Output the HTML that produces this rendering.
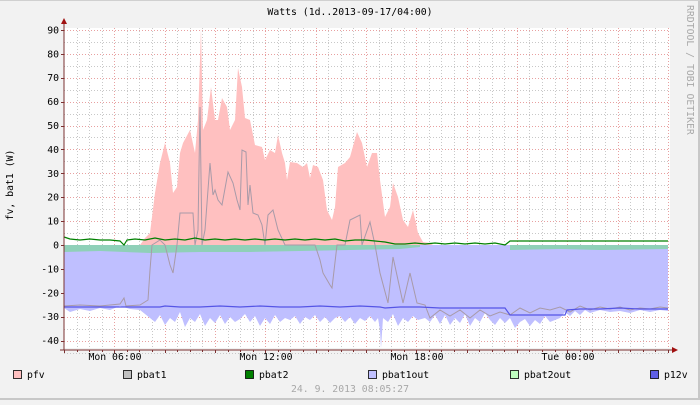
<!DOCTYPE html>
<html><head><meta charset="utf-8"><style>
html,body{margin:0;padding:0;background:#f2f2f2;}
svg text{font-family:"DejaVu Sans Mono","Liberation Mono",monospace;font-size:9.8px;}
</style></head><body>
<svg width="700" height="400" xmlns="http://www.w3.org/2000/svg">
<rect x="0" y="0" width="700" height="400" fill="#f2f2f2"/>
<rect x="698" y="0" width="2" height="400" fill="#c8c8c8"/>
<rect x="0" y="398" width="700" height="2" fill="#c8c8c8"/>
<rect x="0" y="0" width="700" height="1" fill="#d0d0d0"/>
<rect x="64" y="28" width="606" height="320" fill="#ffffff"/>
<g id="grid" stroke-width="1" stroke-dasharray="1,2"></g>
<!-- pfv -->
<polygon fill="#ffc0c0" points="140,245 145,238 150,233 155,193 160,163 165,143 170,163 173,193 177,187 180,153 183,143 190,130 195,153 198,120 201,28 203,130 207,120 211,87 215,120 218,120 222,98 227,107 230,130 235,120 238,68 242,87 245,118 250,120 255,145 262,147 265,160 270,150 275,153 278,135 282,153 285,163 287,180 290,162 297,163 303,167 307,163 310,178 313,165 318,167 323,180 327,210 332,220 335,207 338,167 345,163 350,157 357,132 362,143 367,167 372,153 377,153 380,180 385,217 390,207 393,183 398,197 403,220 408,227 413,210 418,233 423,242 430,243 433,245"/>
<!-- pbat1out -->
<polygon fill="#bfbfff" points="64,245 64,308 70,312 80,309 90,311 100,308 110,310 120,306 130,309 140,310 150,318 155,322 160,315 165,325 170,318 175,322 180,312 185,327 190,318 195,322 200,314 205,326 210,318 215,323 220,315 225,324 230,317 235,322 240,319 245,314 250,322 255,316 260,326 265,318 270,324 275,315 280,322 285,318 290,320 295,316 300,324 305,317 310,320 315,315 320,322 325,317 330,323 335,318 340,316 345,322 350,317 355,324 360,318 365,321 370,316 375,322 378,318 380,330 381,348 383,318 388,322 393,314 398,326 403,318 408,322 413,316 418,320 425,318 430,322 435,315 440,324 445,315 450,325 455,318 460,323 465,314 470,326 475,318 480,322 485,313 490,320 495,325 500,318 505,323 510,318 515,328 520,322 525,319 530,326 535,320 540,324 545,316 550,322 555,320 560,318 565,312 570,316 575,311 580,315 585,310 590,313 600,310 610,312 620,311 630,313 640,310 650,312 660,310 668,311 668,245"/>
<!-- pbat2out band -->
<polygon fill="#8fd0b8" points="64,245 64,252 100,251 150,253 200,252 250,252 300,251 350,250 400,249 420,247 420,245"/>
<polygon fill="#8fd0b8" points="510,245 510,250 560,249 600,250 668,249 668,245"/>
<!-- pbat1 line -->
<polyline fill="none" stroke="#a89aa8" stroke-width="1" points="64,306 80,305 100,306 120,304 124,298 126,306 140,305 148,300 150,270 152,245 160,240 165,245 170,265 173,273 177,245 180,213 193,213 195,245 198,230 200,107 202,245 205,230 210,163 213,195 215,190 218,200 222,205 228,172 233,183 237,200 240,210 242,150 246,152 248,205 250,185 253,213 258,215 262,225 265,245 268,215 273,210 278,230 285,245 300,245 315,245 320,260 323,273 330,285 332,288 337,245 345,245 350,220 360,215 362,245 370,222 375,245 380,273 388,303 393,257 398,280 403,303 410,273 417,303 425,305 430,318 440,310 450,316 460,310 470,318 480,310 490,316 500,312 510,315 520,308 530,313 540,308 550,310 560,307 570,312 580,306 590,310 600,307 610,309 620,307 630,310 640,308 650,309 660,307 668,308"/>
<!-- pbat2 line -->
<polyline fill="none" stroke="#008000" stroke-width="1.2" points="64,237 70,239 80,240 90,239 100,240 110,240 120,241 124,245 127,240 135,239 145,240 155,238 165,240 175,239 185,240 195,238 205,240 215,239 225,240 235,239 245,240 255,239 265,240 275,239 285,240 295,239 305,240 315,239 325,240 335,239 345,241 355,240 365,240 375,241 385,242 395,244 405,244 415,243 425,244 435,243 445,244 455,243 465,244 475,243 485,244 495,243 505,245 510,241 520,241 560,241 600,241 640,241 668,241"/>
<!-- p12v line -->
<polyline fill="none" stroke="#5555e6" stroke-width="1.2" points="64,307 100,307 140,307 160,307 165,306 180,307 200,307 220,306 240,307 260,306 280,307 300,307 320,306 340,307 360,306 380,307 385,308 400,307 420,307 440,308 460,308 480,308 505,308 510,315 565,315 567,310 580,309 600,309 620,308 640,309 668,309"/>
<!-- axes -->
<line x1="64" y1="22" x2="64" y2="350" stroke="#7a3030" stroke-width="1"/>
<line x1="60" y1="350" x2="672" y2="350" stroke="#7a3030" stroke-width="1"/>
<polygon points="61,24 67,24 64,18" fill="#a01010"/>
<polygon points="672,347 672,353 678,350" fill="#a01010"/>
<g id="ticks" stroke="#7a3030"></g>
<g fill="#000" text-anchor="end" id="ylab"></g>
<text x="350" y="15" text-anchor="middle">Watts (1d..2013-09-17/04:00)</text>
<text transform="translate(13,185) rotate(-90)" text-anchor="middle">fv, bat1 (W)</text>
<text transform="translate(687,5) rotate(90)" fill="#a8a8a8">RRDTOOL / TOBI OETIKER</text>
<g text-anchor="middle">
<text x="115" y="360">Mon 06:00</text>
<text x="266" y="360">Mon 12:00</text>
<text x="417" y="360">Mon 18:00</text>
<text x="568" y="360">Tue 00:00</text>
</g>
<g stroke="#000" stroke-width="0.8">
<rect x="13.5" y="370.5" width="8" height="8" fill="#ffc0c0"/>
<rect x="123.5" y="370.5" width="8" height="8" fill="#c0c0c0"/>
<rect x="245.5" y="370.5" width="8" height="8" fill="#008000"/>
<rect x="368.5" y="370.5" width="8" height="8" fill="#c0c0ff"/>
<rect x="510.5" y="370.5" width="8" height="8" fill="#c0ffc0"/>
<rect x="650.5" y="370.5" width="8" height="8" fill="#6060e6"/>
</g>
<text x="27" y="378">pfv</text>
<text x="137" y="378">pbat1</text>
<text x="259" y="378">pbat2</text>
<text x="382" y="378">pbat1out</text>
<text x="524" y="378">pbat2out</text>
<text x="664" y="378">p12v</text>
<text x="350" y="392" text-anchor="middle" fill="#a8a8a8">24. 9. 2013 08:05:27</text>
</svg>
<script>
(function(){
var ns="http://www.w3.org/2000/svg";
var g=document.getElementById("grid");
function ln(x1,y1,x2,y2,c){var l=document.createElementNS(ns,"line");l.setAttribute("x1",x1);l.setAttribute("y1",y1);l.setAttribute("x2",x2);l.setAttribute("y2",y2);l.setAttribute("stroke",c);g.insertBefore(l,g.firstChild);}
for(var k=1;k<49;k++){var x=Math.round(64+12.58*k)+0.5;if(x>670)break;ln(x,28,x,348,k%4==0?"#e8a0a0":"#c8c8c8");}
for(var v=-45;v<=90;v+=5){var y=Math.round(245-2.39*v)+0.5;ln(64,y,670,y,v%10==0?"#e8a0a0":"#c8c8c8");}
var t=document.getElementById("ticks");
for(var k=0;k<49;k++){var x=Math.round(64+12.58*k)+0.5;if(x>670)break;var l=document.createElementNS(ns,"line");l.setAttribute("x1",x);l.setAttribute("x2",x);l.setAttribute("y1",350);l.setAttribute("y2",k%4==0?353:352);t.appendChild(l);}
var yl=document.getElementById("ylab");
for(var v=-40;v<=90;v+=10){var y=245-2.39*v;var e=document.createElementNS(ns,"text");e.setAttribute("x",59);e.setAttribute("y",y+3.5);e.textContent=v;yl.appendChild(e);
var l=document.createElementNS(ns,"line");l.setAttribute("x1",61);l.setAttribute("x2",64);l.setAttribute("y1",Math.round(y)+0.5);l.setAttribute("y2",Math.round(y)+0.5);t.appendChild(l);}
})();
</script>
</body></html>
